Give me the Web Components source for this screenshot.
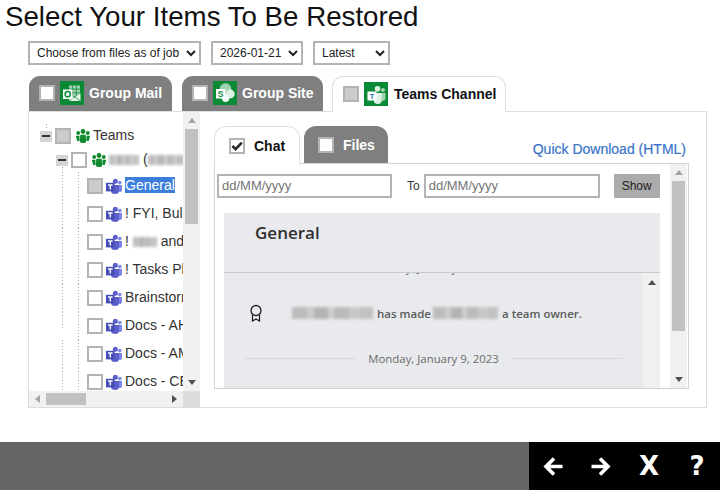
<!DOCTYPE html>
<html lang="en">
<head>
<meta charset="utf-8">
<title>Select Your Items To Be Restored</title>
<style>
  html, body { margin: 0; height: 100%; overflow: hidden; background: #fff; }
  body { font-family: "Liberation Sans", Arial, sans-serif; }
</style>
</head>
<body>
<restore-page></restore-page>

<script>
// Scripts clássicos: tudo dentro de uma IIFE para não vazar nomes no escopo global.
(function () {
const FONT = '"Liberation Sans", Arial, sans-serif';
const CHAT_FONT = '"Open Sans", "Noto Sans", sans-serif';

function define(name, css, html, setup) {
  class El extends HTMLElement {
    constructor() {
      super();
      this.attachShadow({ mode: 'open' });
    }
    connectedCallback() {
      const content = typeof html === 'function' ? html(this) : html;
      this.shadowRoot.innerHTML = `<style>${css}</style>${content}`;
      if (setup) setup(this);
    }
  }
  customElements.define(name, El);
}

// caixa de seleção: none | partial | checked
define('check-box', `
  :host { display: block; flex: none; width: 16px; height: 16px; box-sizing: border-box;
          border: 2px solid #b4b4b4; background: #fff; }
  :host([state="partial"]) { background: #cbcbcb; }
  svg { display: block; width: 12px; height: 12px; }
`, el => el.getAttribute('state') === 'checked'
  ? '<svg viewBox="0 0 12 12"><path d="M1.4 6 4.600 9.200 10.800 2.600" fill="none" stroke="#2b2b2b" stroke-width="2.600"/></svg>'
  : '');

const LOGOS = {
  outlook: `
    <path d="M9 4.500h11v11H9z" fill="#9fd2b0"/>
    <path d="M12.600 4.500v11M16.300 4.500v11M9 8.100h11M9 11.800h11" stroke="#0b8a36" stroke-width=".8"/>
    <path d="M9 13l5.500 3.400L20.500 12.500v7.500H9z" fill="#e6f4ea"/>
    <path d="M9 20l5.500-4.200L20.500 20" fill="none" stroke="#0b8a36" stroke-width=".7"/>
    <rect x="3" y="8.500" width="9.500" height="9.500" fill="#fff"/>
    <circle cx="7.700" cy="13.200" r="2.600" fill="none" stroke="#0b8a36" stroke-width="1.500"/>`,
  sharepoint: `
    <circle cx="12.500" cy="8" r="5.800" fill="#9fd2b0"/>
    <circle cx="17.300" cy="13" r="4.400" fill="#dff1e5"/>
    <circle cx="12.600" cy="17.300" r="3.700" fill="#f2faf5"/>
    <rect x="3" y="8" width="9.500" height="9.500" fill="#fff"/>
    <text x="7.700" y="15.800" text-anchor="middle" font-family="Liberation Sans" font-weight="700" font-size="8.500" fill="#0b8a36">S</text>`,
  teams: `
    <circle cx="13.500" cy="6.800" r="2.800" fill="#dff1e5"/>
    <circle cx="19" cy="8" r="2" fill="#9fd2b0"/>
    <path d="M16.500 11h5v5.500a2.600 2.600 0 0 1-4 2z" fill="#9fd2b0"/>
    <path d="M9.500 11h8.300v7a4 4 0 0 1-8 0z" fill="#dff1e5"/>
    <rect x="3.500" y="9.500" width="9" height="9" fill="#fff"/>
    <text x="8" y="16.700" text-anchor="middle" font-family="Liberation Sans" font-weight="700" font-size="7.500" fill="#2f6fb0">T</text>`,
};

define('app-logo', `
  :host { display: block; flex: none; width: 24px; height: 24px; background: #0b8a36; }
  svg { display: block; width: 24px; height: 24px; }
`, el => `<svg viewBox="0 0 24 24">${LOGOS[el.getAttribute('kind')]}</svg>`);

// ícones pequenos da árvore
define('tree-icon', `
  :host { display: block; flex: none; width: 16px; height: 16px; }
  svg { display: block; width: 16px; height: 16px; }
`, el => el.getAttribute('kind') === 'group'
  ? `<svg viewBox="0 0 16 16" fill="#0f8a2c">
      <circle cx="8" cy="3.500" r="2.400"/><circle cx="3.200" cy="5" r="1.900"/><circle cx="12.800" cy="5" r="1.900"/>
      <path d="M5.300 6.800h5.400l.5 6.200a3.200 2 0 0 1-6.400 0z"/>
      <path d="M.8 7.800h3.600l.2 5.200H2.200zM11.600 7.800h3.600L13.800 13h-2.400z"/>
    </svg>`
  : `<svg viewBox="0 0 16 16">
      <circle cx="9.300" cy="3.300" r="2.500" fill="#5b5fc7"/>
      <circle cx="13.800" cy="4.600" r="1.800" fill="#7b83eb"/>
      <path d="M11.500 7h4.500v4.800a2.200 2.200 0 0 1-4 1.300z" fill="#7b83eb"/>
      <path d="M5 7h8v6a4 3 0 0 1-8 0z" fill="#5b5fc7"/>
      <rect x="0" y="4.800" width="8.600" height="8.600" fill="#464eb8"/>
      <path d="M2 7h4.600M4.300 7v4.600" stroke="#fff" stroke-width="1.400"/>
    </svg>`);

// borrão usado no lugar dos nomes censurados da captura
define('blur-mark', `
  :host { display: inline-block; vertical-align: middle; height: var(--h, 11px); width: var(--w, 30px);
          filter: blur(1.600px);
          background: linear-gradient(90deg, #bcbcbc 0 18%, #cbcbcb 18% 27%, #b4b4b4 27% 44%, #cfcfcf 44% 52%, #bbbbbb 52% 70%, #c8c8c8 70% 84%, #c0c0c0 84%); }
`, '');

// barra de rolagem desenhada: setas + trilho + polegar
define('scroll-bar', `
  :host { display: flex; flex: none; background: var(--track, #f1f1f1); box-sizing: border-box; }
  :host([dir="v"]) { flex-direction: column; width: var(--size, 17px); align-items: center; }
  :host([dir="h"]) { flex-direction: row; height: var(--size, 16px); align-items: center; }
  .btn { flex: none; display: flex; align-items: center; justify-content: center; }
  :host([dir="v"]) .btn { height: var(--btn, 17px); width: 100%; }
  :host([dir="h"]) .btn { width: var(--btn, 17px); height: 100%; }
  .rail { flex: 1; display: flex; min-width: 0; min-height: 0; }
  :host([dir="v"]) .rail { flex-direction: column; width: 13px; }
  :host([dir="h"]) .rail { height: 12px; }
  .thumb { background: #c1c1c1; flex: none; }
  :host([dir="v"]) .thumb { width: 100%; height: var(--thumb, 50px); }
  :host([dir="h"]) .thumb { height: 100%; width: var(--thumb, 40px); }
  i { display: block; width: 0; height: 0; border: 4px solid transparent; }
  i.up { border-top: 0; border-bottom: 5px solid var(--a, #a3a3a3); }
  i.down { border-bottom: 0; border-top: 5px solid var(--b, #505050); }
  i.left { border-left: 0; border-right: 5px solid var(--a, #a3a3a3); }
  i.right { border-right: 0; border-left: 5px solid var(--b, #505050); }
`, el => {
  const vertical = el.getAttribute('dir') === 'v';
  return `<div class="btn"><i class="${vertical ? 'up' : 'left'}"></i></div>
    <div class="rail"><div class="thumb"></div></div>
    <div class="btn"><i class="${vertical ? 'down' : 'right'}"></i></div>`;
});

// aba de primeiro nível
define('main-tab', `
  :host { display: flex; flex: none; align-items: center; box-sizing: border-box; height: 35px;
          padding: 0 0 1px 10px; border-radius: 11px 11px 0 0; background: #7f7f7f;
          color: #fff; font: bold 14px ${FONT}; white-space: nowrap; }
  :host([active]) { height: 36px; margin-bottom: -1px; padding: 0 0 2px 10px; background: #fff; color: #111;
                    border: 1px solid #e0e0e0; border-bottom: 0; }
  app-logo { margin: 0 5px 0 5px; }
  :host([active]) app-logo { margin-right: 6px; }
`, el => `<check-box state="${el.getAttribute('state') || 'none'}"></check-box>
  <app-logo kind="${el.getAttribute('kind')}"></app-logo><slot></slot>`);

// aba interna (Chat / Files)
define('sub-tab', `
  :host { display: flex; flex: none; align-items: center; box-sizing: border-box; height: 37px;
          padding-left: 14px; border-radius: 12px 12px 0 0; background: #7f7f7f;
          color: #fff; font: bold 14px ${FONT}; }
  :host([active]) { height: 38px; margin-bottom: -1px; background: #fff; color: #111;
                    border: 1px solid #e0e0e0; border-bottom: 0; }
  check-box { margin-right: 9px; }
`, el => `<check-box state="${el.getAttribute('state') || 'none'}"></check-box><slot></slot>`);

// linha da árvore; as guias pontilhadas são fundos do próprio host
const DOTS = 'repeating-linear-gradient(to bottom, #a8a8a8 0 1px, transparent 1px 3px)';
define('tree-row', `
  :host { display: flex; align-items: center; box-sizing: border-box; white-space: nowrap;
          font: 14px ${FONT}; color: #333; background-repeat: no-repeat; }
  :host([level="0"]) { height: 24px; padding-left: 11px; margin-top: 12px;
    background-image: ${DOTS}; background-size: 1px 4px; background-position: 17px 0; }
  :host([level="1"]) { height: 24px; padding-left: 27px;
    background-image: ${DOTS}; background-size: 1px 5px; background-position: 33px 19px; }
  :host([level="2"]) { height: 28px; padding-left: 58px;
    background-image: ${DOTS}, ${DOTS}; background-size: 1px 100%, 1px 100%;
    background-position: 33px 0, 49px 0; }
  :host([level="2"][short]) { background-size: 1px 16px, 1px 100%; }
  .exp { flex: none; width: 12px; height: 11px; margin-right: 3px; background: #d4d4d4;
         display: flex; align-items: center; justify-content: center; }
  .exp::after { content: ""; width: 8px; height: 2px; background: #333; }
  tree-icon { margin-left: 3px; }
  :host([level="0"]) tree-icon, :host([level="1"]) tree-icon { margin-left: 4px; }
  .label { margin-left: 2px; padding-bottom: 2px; }
  :host([level="2"]) .label { margin-left: 3px; }
`, el => {
  const level = el.getAttribute('level');
  const exp = level === '2' ? '' : '<span class="exp"></span>';
  const kind = level === '2' ? 'teams' : 'group';
  return `${exp}<check-box state="${el.getAttribute('state') || 'none'}"></check-box>
    <tree-icon kind="${kind}"></tree-icon><span class="label"><slot></slot></span>`;
});

define('chat-day', `
  :host { display: flex; align-items: center; gap: 13px; font: 11.400px ${CHAT_FONT}; color: #6a6a6a;
          height: 18px; white-space: nowrap; }
  hr { flex: 1; margin: 0; border: 0; border-top: 1px solid #d6d8db; }
`, '<hr><slot></slot><hr>');

define('chat-event', `
  :host { display: flex; align-items: center; font: 600 11.500px ${CHAT_FONT}; color: #5c5c5c;
          white-space: nowrap; }
  svg { flex: none; width: 14px; height: 18px; margin-right: 29px; }
`, `<svg viewBox="0 0 14 18" fill="none" stroke="#222" stroke-width="1.300">
    <circle cx="7" cy="6.500" r="5"/>
    <path d="M3.500 10.500v6.500l3.500-2 3.500 2v-6.500"/>
  </svg><slot></slot>`);

define('date-input', `
  :host { display: block; flex: none; }
  input { display: block; box-sizing: border-box; width: var(--w, 175px); height: 24px; margin: 0;
          padding: 0 3px 1px; border: 2px solid #b4b4b4; border-radius: 0; outline: 0; background: #fff;
          font: 13px ${FONT}; color: #333; }
  input::placeholder { color: #757575; opacity: 1; }
`, '<input type="text" placeholder="dd/MM/yyyy">');

define('job-select', `
  :host { display: block; flex: none; }
  select { display: block; box-sizing: border-box; width: var(--w, 100px); height: 24px; margin: 0;
           padding: 0 3px; border: 2px solid #b4b4b4; border-radius: 0; background-color: #fff;
           font: 12px ${FONT}; color: #222; outline: 0; }
`, el => `<select><option>${el.getAttribute('value')}</option></select>`);

define('footer-nav', `
  :host { display: flex; justify-content: flex-end; flex: none; height: 48px; background: #666; }
  nav { display: grid; grid-template-columns: repeat(4, 48px); width: 191px; background: #000; }
  span { display: flex; align-items: center; justify-content: center; color: #fff;
         font: bold 26px "DejaVu Sans", sans-serif; }
  svg { display: block; width: 20px; height: 19px; }
`, `<nav>
    <span><svg viewBox="0 0 20 19" fill="none" stroke="#fff" stroke-width="3.600"><path d="M19.500 9.500H3M11 1.500 3 9.500l8 8"/></svg></span>
    <span><svg viewBox="0 0 20 19" fill="none" stroke="#fff" stroke-width="3.600"><path d="M.5 9.500H17M9 1.500l8 8-8 8"/></svg></span>
    <span>X</span><span>?</span>
  </nav>`);

// árvore da esquerda
define('team-tree', `
  :host { display: grid; flex: none; width: 171px; height: 295px;
          grid-template-columns: 154px 17px; grid-template-rows: 279px 16px; }
  .view { overflow: hidden; }
  .sel { background: #3d7edb; color: #fff; }
  .v { --thumb: 95px; }
  .h { --btn: 17px; --thumb: 40px; --track: #f1f1f1; }
  .corner { background: #dcdcdc; }
  blur-mark { --h: 10px; }
`, `
  <div class="view">
    <tree-row level="0" state="partial">Teams</tree-row>
    <tree-row level="1"><blur-mark style="--w:30px"></blur-mark> (<blur-mark style="--w:36px"></blur-mark></tree-row>
    <tree-row level="2" state="partial"><span class="sel">General</span></tree-row>
    <tree-row level="2">! FYI, Bulletin</tree-row>
    <tree-row level="2">! <blur-mark style="--w:24px"></blur-mark> and</tree-row>
    <tree-row level="2">! Tasks Planner</tree-row>
    <tree-row level="2">Brainstorming</tree-row>
    <tree-row level="2" short>Docs - AHR</tree-row>
    <tree-row level="2">Docs - AMS</tree-row>
    <tree-row level="2">Docs - CEO</tree-row>
  </div>
  <scroll-bar class="v" dir="v"></scroll-bar>
  <scroll-bar class="h" dir="h"></scroll-bar>
  <div class="corner"></div>
`);

// conversa exportada (parte cinza)
define('chat-view', `
  :host { display: flex; flex-direction: column; flex: none; width: 436px; height: 175px; margin-left: 9px;
          background: #e8eaed; overflow: hidden; }
  header { flex: none; box-sizing: border-box; height: 60px; padding: 8px 0 0 31px; border-bottom: 1px solid #c9cbce;
           font: 600 17px/24px ${CHAT_FONT}; color: #2f2f2f; }
  .body { flex: 1; display: flex; min-height: 0; }
  .log { flex: 1; min-width: 0; padding: 0 21px; overflow: hidden; }
  .day-top { margin-top: -15px; }
  chat-event { margin: 28px 0 0 4px; }
  chat-day { margin-top: 27px; }
  .rail { flex: none; width: 17px; background: #f0f0f0; display: flex; justify-content: center; }
  .rail i { display: block; width: 0; height: 0; margin-top: 7px; border: 4px solid transparent; border-top: 0;
            border-bottom: 5px solid #505050; }
  blur-mark { --h: 12px; }
`, `
  <header>General</header>
  <div class="body">
    <div class="log">
      <chat-day class="day-top">Monday, January 2, 2023</chat-day>
      <chat-event><blur-mark style="--w:81px;margin-right:4px"></blur-mark>has made<blur-mark style="--w:65px;margin:0 4px 0 2px"></blur-mark>a team owner.</chat-event>
      <chat-day>Monday, January 9, 2023</chat-day>
    </div>
    <div class="rail"><i></i></div>
  </div>
`);

// painel direito com as abas Chat / Files
define('channel-pane', `
  :host { display: flex; flex-direction: column; flex: 1; min-width: 0; padding: 14px 0 0 14px; box-sizing: border-box; }
  .tabs { display: flex; align-items: flex-end; width: 474px; height: 37px; position: relative; }
  sub-tab[active] { width: 86px; }
  sub-tab:not([active]) { width: 84px; margin-left: 4px; }
  a { margin: 0 2px 6px auto; color: #3a74c9; font: 14px ${FONT}; text-decoration: none; -webkit-text-stroke: .2px #3a74c9; }
  .frame { display: flex; box-sizing: border-box; width: 475px; height: 226px; border: 1px solid #d4d4d4; }
  .main { flex: 1; min-width: 0; overflow: hidden; }
  .dates { display: flex; align-items: center; height: 24px; margin: 10px 0 15px 2px; font: 12px ${FONT}; color: #333; }
  .to { margin: 0 4px 0 15px; }
  button { flex: none; width: 46px; height: 24px; margin: 0 0 0 14px; padding: 0; border: 0; background: #ababab;
           color: #222; font: 12px ${FONT}; }
  scroll-bar { --btn: 17px; --thumb: 150px; margin-right: 1px; }
`, `
  <div class="tabs">
    <sub-tab active state="checked">Chat</sub-tab>
    <sub-tab>Files</sub-tab>
    <a href="#">Quick Download (HTML)</a>
  </div>
  <div class="frame">
    <div class="main">
      <div class="dates">
        <date-input style="--w:175px"></date-input>
        <span class="to">To</span>
        <date-input style="--w:176px"></date-input>
        <button type="button">Show</button>
      </div>
      <chat-view></chat-view>
    </div>
    <scroll-bar dir="v"></scroll-bar>
  </div>
`);

define('restore-page', `
  :host { display: flex; flex-direction: column; height: 100vh; font-family: ${FONT}; color: #111; }
  h1 { margin: 0; padding-left: 5px; font: 27.700px/34px ${FONT}; color: #111; }
  .filters { display: flex; gap: 10px; margin: 7px 0 0 28px; }
  .tabs { display: flex; margin: 11px 0 0 29px; align-items: flex-end; height: 35px; position: relative; z-index: 1; }
  .panel { display: flex; box-sizing: border-box; width: 679px; height: 297px; margin-left: 28px; border: 1px solid #dedede; }
  footer-nav { margin-top: auto; }
`, `
  <h1>Select Your Items To Be Restored</h1>
  <div class="filters">
    <job-select style="--w:173px" value="Choose from files as of job"></job-select>
    <job-select style="--w:92px" value="2026-01-21"></job-select>
    <job-select style="--w:77px" value="Latest"></job-select>
  </div>
  <div class="tabs">
    <main-tab kind="outlook" style="width:143px">Group Mail</main-tab>
    <main-tab kind="sharepoint" style="width:141px;margin-left:10px">Group Site</main-tab>
    <main-tab kind="teams" state="partial" active style="width:174px;margin-left:9px">Teams Channel</main-tab>
  </div>
  <div class="panel">
    <team-tree></team-tree>
    <channel-pane></channel-pane>
  </div>
  <footer-nav></footer-nav>
`);
})();
</script>
</body>
</html>
